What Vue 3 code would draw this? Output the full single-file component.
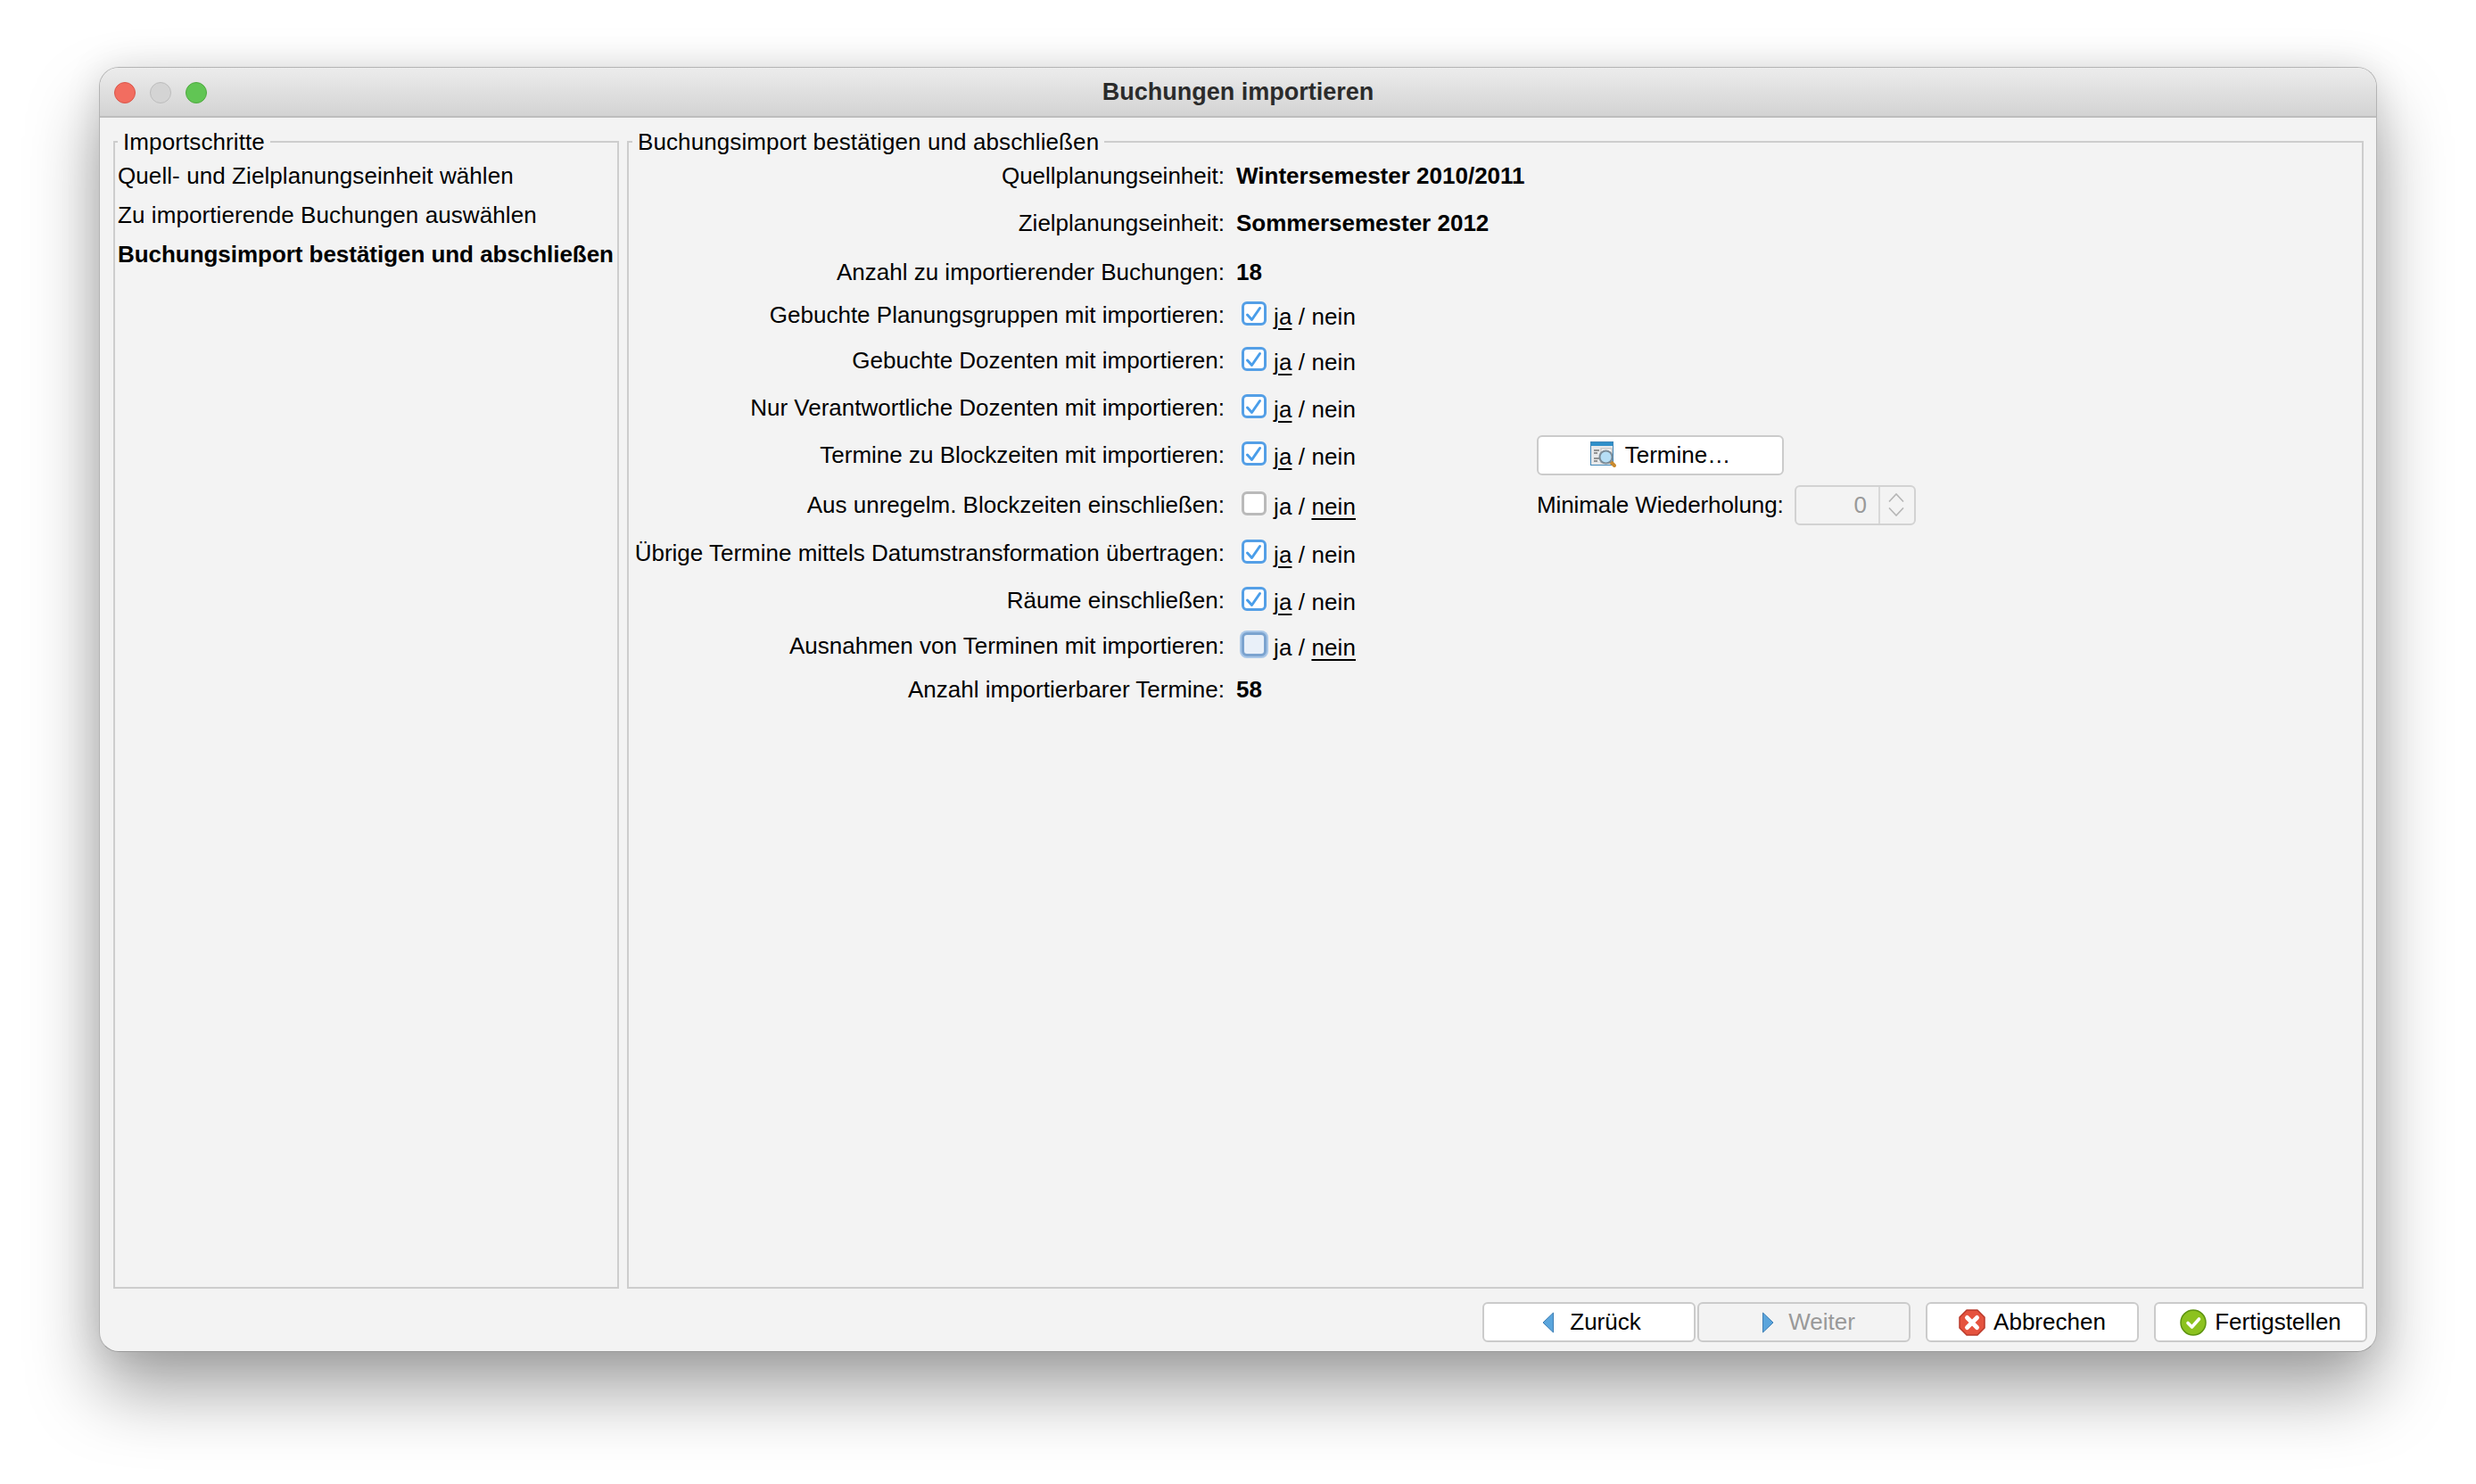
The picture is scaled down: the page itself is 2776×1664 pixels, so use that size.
<template>
  <div class="page">
    <div class="window">
      <!-- Titelleiste -->
      <header class="titlebar">
        <div class="lights">
          <span class="light red"></span>
          <span class="light grey"></span>
          <span class="light green"></span>
        </div>
        <span class="title">Buchungen importieren</span>
      </header>

      <main class="panels">
        <fieldset class="box steps">
          <legend>Importschritte</legend>
          <div
            v-for="(step, i) in steps"
            :key="step"
            class="step"
            :class="{ current: i === 2 }"
          >{{ step }}</div>
        </fieldset>

        <fieldset class="box confirm">
          <legend>Buchungsimport bestätigen und abschließen</legend>
          <div class="form">
            <template v-for="row in rows" :key="row.label">
              <div class="label">{{ row.label }}:</div>

              <div v-if="row.value" class="value">{{ row.value }}</div>
              <div v-else class="toggle">
                <span class="check" :class="{ on: row.on, focus: row.focus }">
                  <svg v-if="row.on" width="22" height="21" viewBox="0 0 22 21" fill="none">
                    <path d="M3.5 12 L8.5 17.5 L17.5 4.5" stroke="#4a9eea" stroke-width="3" stroke-linecap="round" stroke-linejoin="round" />
                  </svg>
                </span>
                <span class="choice">
                  <span :class="{ picked: row.on }">ja</span> / <span :class="{ picked: !row.on }">nein</span>
                </span>
              </div>

              <button v-if="row.extra === 'termine'" class="btn termine" type="button">
                <svg width="30" height="30" viewBox="0 0 30 30">
                  <rect x="0.5" y="0.5" width="25" height="26" fill="#e6e8ea" stroke="#3f86b8" />
                  <rect x="1" y="1" width="24" height="4" fill="#2f8fc9" />
                  <rect x="12" y="8" width="12" height="16" fill="#fbfbfb" stroke="#b8b8b8" />
                  <path d="M4 10h6M4 13h4M4 19h6M4 22h4" stroke="#777" stroke-width="1.4" />
                  <path d="M22 22l5 5" stroke="#c98a2e" stroke-width="4" stroke-linecap="round" />
                  <circle cx="17.5" cy="17.5" r="7" fill="#b6def5" stroke="#7c8c98" stroke-width="2" />
                </svg>
                <span>Termine…</span>
              </button>
              <template v-if="row.extra === 'minimum'">
                <div class="min-label">Minimale Wiederholung:</div>
                <div class="spinner">
                  <span class="spin-value">0</span>
                  <span class="spin-arrows">
                    <svg width="18" height="10" viewBox="0 0 18 10" fill="none"><path d="M1 9.5 L9 1 L17 9.5" stroke="#b5b5b5" stroke-width="1.6" /></svg>
                    <svg width="18" height="10" viewBox="0 0 18 10" fill="none"><path d="M1 0.5 L9 9 L17 0.5" stroke="#b5b5b5" stroke-width="1.6" /></svg>
                  </span>
                </div>
              </template>
            </template>
          </div>
        </fieldset>
      </main>

      <footer class="footer">
        <div class="nav">
          <button class="btn wide back" type="button">
            <svg width="14" height="24" viewBox="0 0 14 24">
              <path d="M12.5 1 L1 12 L12.5 23 Z" fill="#5aa5dc" stroke="#3f7fb5" stroke-linejoin="round" />
            </svg>
            <span>Zurück</span>
          </button>
          <button class="btn wide next disabled" type="button">
            <svg width="14" height="24" viewBox="0 0 14 24">
              <path d="M1.5 1 L13 12 L1.5 23 Z" fill="#5aa5dc" stroke="#3f7fb5" stroke-linejoin="round" />
            </svg>
            <span>Weiter</span>
          </button>
        </div>
        <button class="btn wide tight" type="button">
          <svg width="30" height="30" viewBox="0 0 30 30">
            <path d="M9 1h12l8 8v12l-8 8H9l-8-8V9z" fill="#e5533f" stroke="#b93a2b" stroke-width="1.5" stroke-linejoin="round" />
            <path d="M9.5 9.5 L20.5 20.5 M20.5 9.5 L9.5 20.5" stroke="#fff" stroke-width="5" stroke-linecap="round" />
          </svg>
          <span>Abbrechen</span>
        </button>
        <button class="btn wide tight" type="button">
          <svg width="30" height="30" viewBox="0 0 30 30">
            <circle cx="15" cy="15" r="14" fill="#8cc21f" stroke="#5e9410" stroke-width="1.5" />
            <path d="M9 15.5 L13.5 20 L21.5 11" fill="none" stroke="#fff" stroke-width="3.6" stroke-linecap="round" stroke-linejoin="round" />
          </svg>
          <span>Fertigstellen</span>
        </button>
      </footer>
    </div>
  </div>
</template>

<script setup>
const steps = [
  'Quell- und Zielplanungseinheit wählen',
  'Zu importierende Buchungen auswählen',
  'Buchungsimport bestätigen und abschließen'
]

const rows = [
  { label: 'Quellplanungseinheit', value: 'Wintersemester 2010/2011' },
  { label: 'Zielplanungseinheit', value: 'Sommersemester 2012' },
  { label: 'Anzahl zu importierender Buchungen', value: '18' },
  { label: 'Gebuchte Planungsgruppen mit importieren', on: true },
  { label: 'Gebuchte Dozenten mit importieren', on: true },
  { label: 'Nur Verantwortliche Dozenten mit importieren', on: true },
  { label: 'Termine zu Blockzeiten mit importieren', on: true, extra: 'termine' },
  { label: 'Aus unregelm. Blockzeiten einschließen', on: false, extra: 'minimum' },
  { label: 'Übrige Termine mittels Datumstransformation übertragen', on: true },
  { label: 'Räume einschließen', on: true },
  { label: 'Ausnahmen von Terminen mit importieren', on: false, focus: true },
  { label: 'Anzahl importierbarer Termine', value: '58' }
]
</script>

<style>
html,
body {
  margin: 0;
  background: #fff;
}
</style>

<style scoped>
.page {
  width: 2776px;
  height: 1664px;
  box-sizing: border-box;
  padding: 75px 111px 148px;
  overflow: hidden;
  background: #fff;
  font-family: "Liberation Sans", Arial, sans-serif;
  font-size: 26px;
  color: #000;
}

.window {
  height: 100%;
  display: flex;
  flex-direction: column;
  box-sizing: border-box;
  background: #f3f3f3;
  border: 1px solid #b4b4b4;
  border-bottom-color: #9a9a9a;
  border-radius: 22px;
  box-shadow: 0 44px 80px rgba(0, 0, 0, 0.36), 0 0 40px rgba(0, 0, 0, 0.1);
  overflow: hidden;
}

.titlebar {
  position: relative;
  flex: none;
  height: 56px;
  display: flex;
  align-items: center;
  justify-content: center;
  box-sizing: border-box;
  background: linear-gradient(#ececec, #d3d3d3);
  border-bottom: 2px solid #bdbdbd;
}

.lights {
  position: absolute;
  left: 16px;
  top: 16px;
  display: flex;
  gap: 16px;
}

.light {
  width: 24px;
  height: 24px;
  box-sizing: border-box;
  border-radius: 50%;
  border: 1px solid;
}

.red { background: #f26d60; border-color: #d9564a; }
.grey { background: #d4d4d4; border-color: #bcbcbc; }
.green { background: #61c554; border-color: #4ea93f; }

.title {
  font-size: 27px;
  font-weight: 700;
  color: #2b2b2b;
}

.panels {
  flex: 1;
  min-height: 0;
  display: flex;
  gap: 9px;
  padding: 12px 14px 0 15px;
}

.box {
  margin: 0;
  padding: 1px 4px 0;
  min-width: 0;
  box-sizing: border-box;
  border: 2px solid #cdcdcd;
}

.box legend {
  padding: 0 6px;
  line-height: 30px;
  white-space: nowrap;
  letter-spacing: 0.1px;
}

.steps {
  flex: none;
  width: 567px;
  padding-left: 3px;
}

.confirm {
  flex: 1;
}

.step {
  height: 44px;
  line-height: 44px;
  white-space: nowrap;
  letter-spacing: 0.08px;
}

.step.current {
  font-weight: 700;
  letter-spacing: -0.04px;
}

.form {
  margin-left: -4px;
  margin-right: -14px;
  display: grid;
  grid-template-columns: 668px 323px 275px 135px;
  grid-template-rows: 44px 62px 48px 48px 54px 52px 54px 58px 50px 56px 46px 52px;
  column-gap: 14px;
  align-items: center;
}

.label {
  grid-column: 1;
  text-align: right;
  white-space: nowrap;
}

.value {
  grid-column: 2;
  margin-left: -1px;
  font-weight: 700;
  white-space: nowrap;
}

.toggle {
  grid-column: 2;
  margin-left: -1px;
  display: flex;
  align-items: center;
  gap: 8px;
  padding-left: 6px;
}

.check {
  width: 28px;
  height: 27px;
  margin-bottom: 3px;
  flex: none;
  display: flex;
  align-items: center;
  justify-content: center;
  box-sizing: border-box;
  background: #fff;
  border: 3px solid #bababa;
  border-radius: 6px;
}

.check.on {
  border-color: #549fe6;
}

.check.focus {
  background: #e9f0f9;
  border-color: #7ba3cf;
  box-shadow: 0 0 0 2px #a9c7e8;
}

.choice {
  padding-top: 5px;
  white-space: nowrap;
  letter-spacing: 0.1px;
}

.picked {
  text-decoration: underline;
  text-decoration-thickness: 2px;
  text-underline-offset: 4px;
}

.btn {
  height: 45px;
  display: flex;
  align-items: center;
  justify-content: center;
  gap: 15px;
  padding: 0;
  box-sizing: border-box;
  font: inherit;
  color: #000;
  background: #fff;
  border: 2px solid #cbcbcb;
  border-radius: 6px;
}

.termine {
  grid-column: 3;
  margin-left: -1px;
  width: 277px;
  gap: 9px;
}

.min-label {
  grid-column: 3;
  margin-left: -1px;
  white-space: nowrap;
  letter-spacing: -0.1px;
}

.spinner {
  grid-column: 4;
  margin-left: -1px;
  height: 45px;
  display: flex;
  box-sizing: border-box;
  color: #999;
  border: 2px solid #d2d2d2;
  border-radius: 6px;
}

.spin-value {
  flex: 1;
  line-height: 41px;
  text-align: right;
  padding-right: 13px;
}

.spin-arrows {
  width: 40px;
  flex: none;
  box-sizing: border-box;
  padding-right: 2px;
  display: flex;
  flex-direction: column;
  align-items: center;
  justify-content: center;
  gap: 6px;
  border-left: 2px solid #d8d8d8;
}

.footer {
  flex: none;
  display: flex;
  justify-content: flex-end;
  gap: 17px;
  padding: 15px 10px 10px 0;
}

.nav {
  display: flex;
  gap: 2px;
}

.wide {
  width: 239px;
}

.back {
  gap: 17px;
  padding-left: 6px;
}

.next {
  gap: 16px;
  padding-left: 10px;
}

.tight {
  gap: 9px;
}

.disabled {
  color: #999;
  background: #f3f3f3;
}
</style>
